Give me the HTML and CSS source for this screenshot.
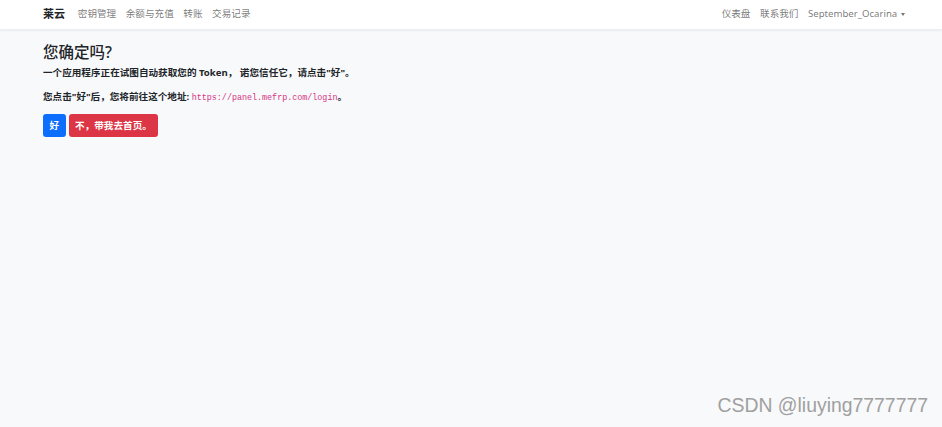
FILE: index.html
```html
<!DOCTYPE html>
<html lang="zh">
<head>
<meta charset="utf-8">
<title>莱云</title>
<link rel="stylesheet" href="styles.css">
</head>
<body>
<nav class="navbar">
  <div class="nav-left">
    <a class="brand">莱云</a>
    <a class="nav-link">密钥管理</a>
    <a class="nav-link">余额与充值</a>
    <a class="nav-link">转账</a>
    <a class="nav-link">交易记录</a>
  </div>
  <div class="nav-right">
    <a class="nav-link">仪表盘</a>
    <a class="nav-link">联系我们</a>
    <a class="nav-link dropdown">September_Ocarina<span class="caret"></span></a>
  </div>
</nav>
<main class="content">
  <h4 class="title">您确定吗?</h4>
  <p class="line">一个应用程序正在试图自动获取您的 Token， 诺您信任它，请点击"好"。</p>
  <p class="line">您点击"好"后，您将前往这个地址: <code>https://panel.mefrp.com/login</code>。</p>
  <div class="actions">
    <button class="btn btn-primary">好</button>
    <button class="btn btn-danger">不，带我去首页。</button>
  </div>
</main>
<div class="watermark">CSDN @liuying7777777</div>
</body>
</html>
```
FILE: styles.css
```css
html, body {
  margin: 0;
  padding: 0;
}
body {
  background: #f8f9fa;
  font-family: "Noto Sans", "Noto Sans CJK SC", sans-serif;
  font-size: 9.6px;
  line-height: 1.5;
  color: #212529;
  height: 427px;
  overflow: hidden;
}
.navbar {
  height: 30px;
  background: #fff;
  display: flex;
  align-items: center;
  justify-content: space-between;
  padding: 0 32px 0 43px;
  box-shadow: 0 1px 2px rgba(0, 0, 0, 0.06);
  border-bottom: 1px solid #eceef0;
  box-sizing: border-box;
}
.nav-left, .nav-right {
  display: flex;
  align-items: center;
}
.brand {
  font-size: 11px;
  font-weight: 700;
  color: #212529;
  margin-right: 8px;
}
.nav-link {
  padding: 0 4.8px;
  color: rgba(0, 0, 0, 0.55);
  font-size: 9.6px;
}
.dropdown {
  display: flex;
  align-items: center;
}
.caret {
  display: inline-block;
  margin-left: 4px;
  width: 0;
  height: 0;
  border-left: 2.5px solid transparent;
  border-right: 2.5px solid transparent;
  border-top: 3px solid rgba(0, 0, 0, 0.55);
}
.content {
  padding: 13px 43px 0;
}
.title {
  margin: 0 0 4px;
  font-size: 15.5px;
  font-weight: 500;
  line-height: 1.2;
}
.line {
  margin: 0 0 9.6px;
  font-weight: 700;
  font-size: 9.6px;
}
code {
  font-family: "Liberation Mono", "DejaVu Sans Mono", monospace;
  font-size: 8.4px;
  color: #d63384;
  font-weight: 400;
}
.actions {
  display: flex;
  gap: 3px;
}
.btn {
  border: none;
  border-radius: 3px;
  height: 23px;
  padding: 0 6.5px;
  color: #fff;
  font-family: inherit;
  font-size: 9.6px;
  font-weight: 700;
  white-space: nowrap;
}
.btn-primary {
  background: #0d6efd;
}
.btn-danger {
  background: #dc3545;
}
.watermark {
  position: absolute;
  right: 14px;
  bottom: 7px;
  font-family: "Liberation Sans", Arial, sans-serif;
  font-size: 19.4px;
  color: #a0a0a0;
}
```
